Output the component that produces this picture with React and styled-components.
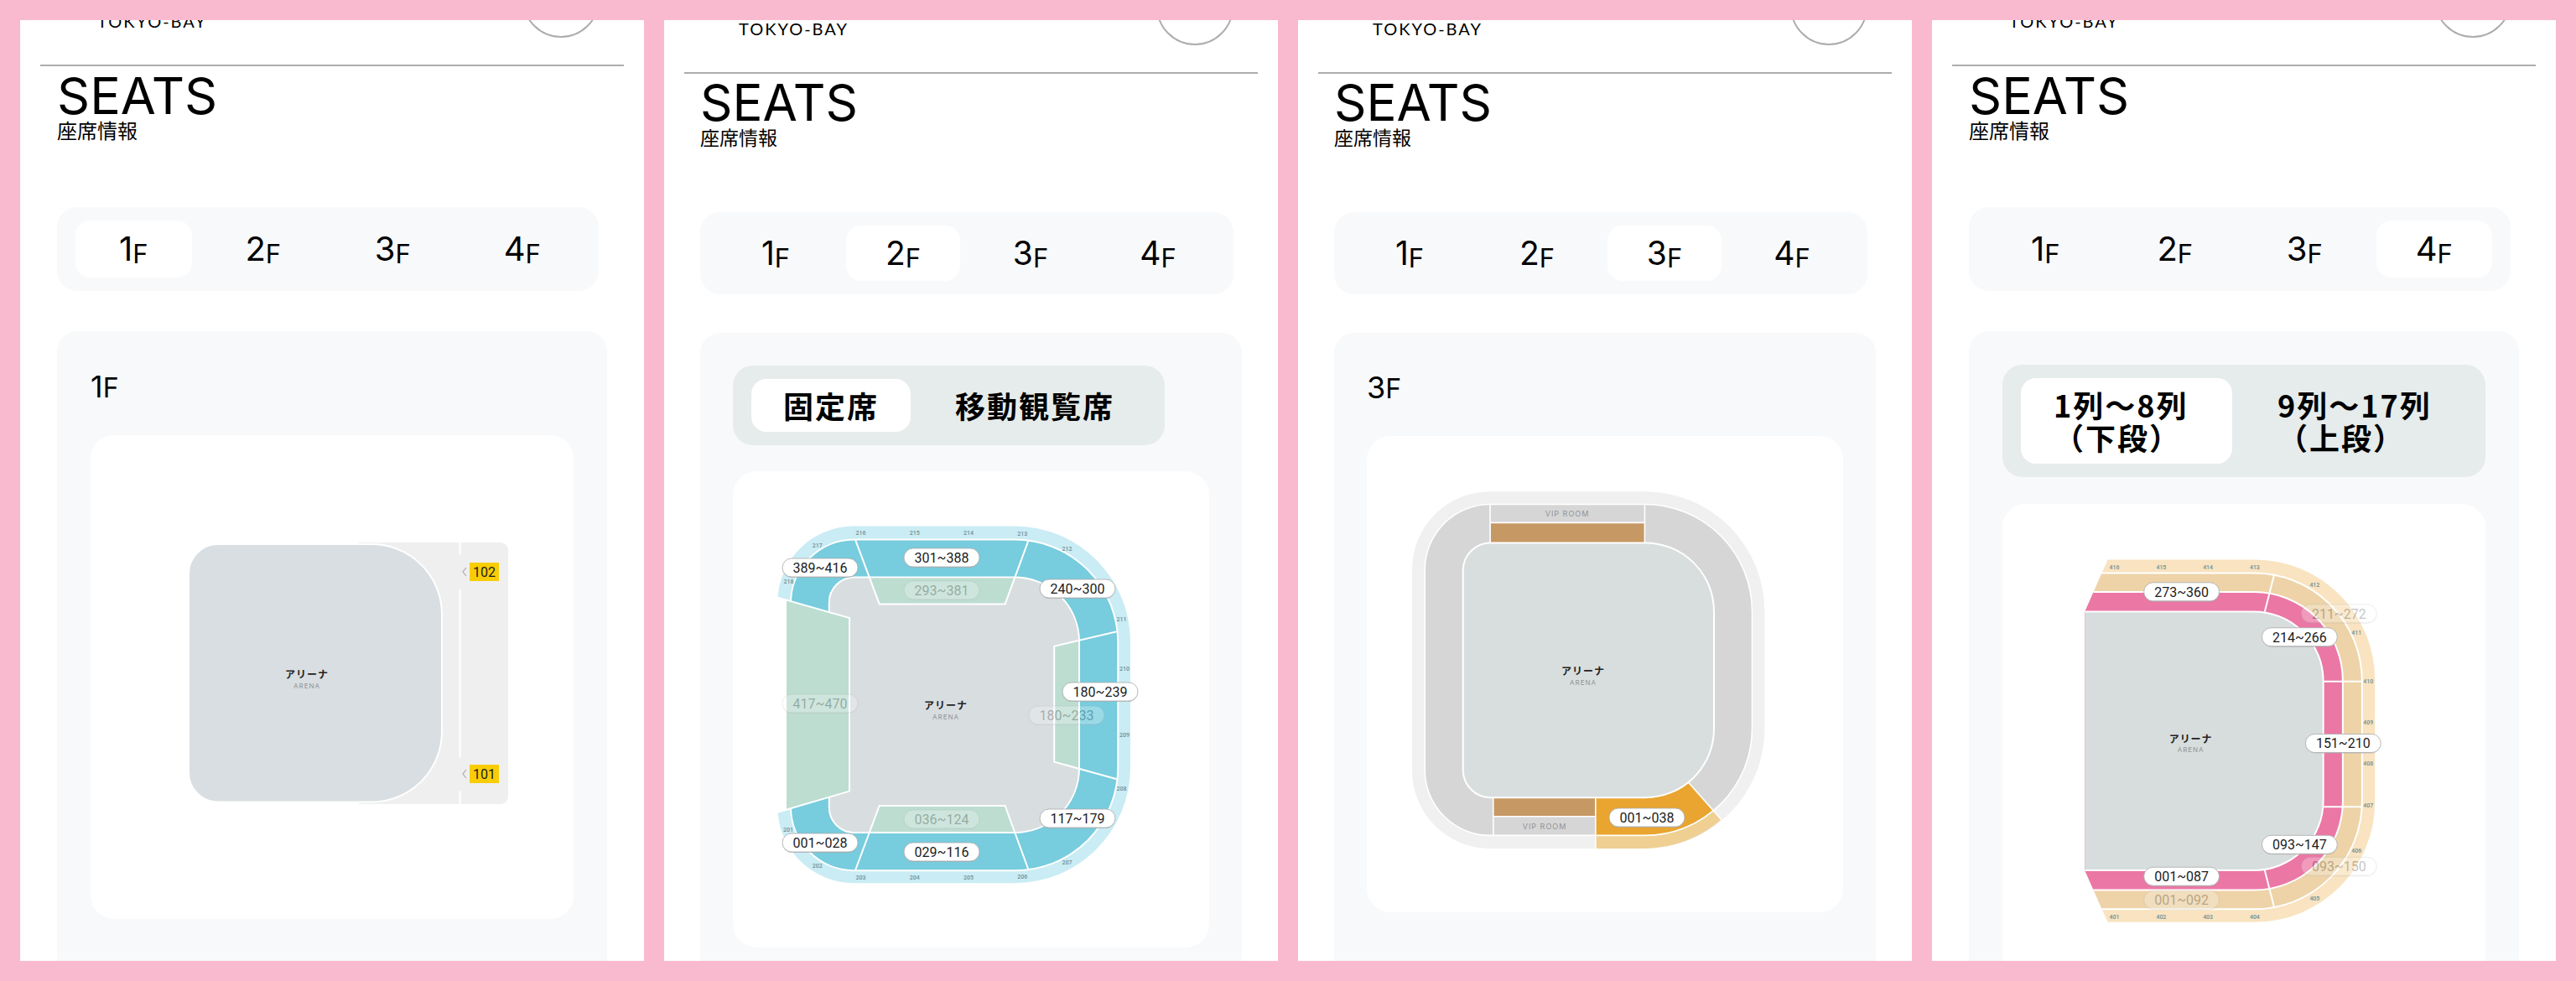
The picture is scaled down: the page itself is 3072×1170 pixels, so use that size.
import React, { useState } from 'react';
import styled, { createGlobalStyle, ThemeProvider } from 'styled-components';

const GlobalStyle = createGlobalStyle`
  *, *::before, *::after {
    box-sizing: border-box;
  }

  body {
    margin: 0;
    background: #f9bad0;
    color: #000;
    font-family: Inter, "Noto Sans CJK JP", sans-serif;
  }
`;

const regular = {
  scrolled: 73,
  edge: 44,
  placeStart: 68,
  headGap: 5,
  title: 61,
  subtitle: 24,
  tabsTop: 78,
  tabHeight: 68,
  tab: 40,
  cardTop: 48,
  cardPadding: 40,
  togglePadding: 39,
  toggleGap: 32,
};

const compact = {
  scrolled: 64,
  edge: 43,
  placeStart: 65,
  headGap: 4,
  title: 60,
  subtitle: 23,
  tabsTop: 76,
  tabHeight: 66,
  tab: 39,
  cardTop: 46,
  cardPadding: 39,
  togglePadding: 38,
  toggleGap: 31,
};

const Board = styled.main`
  display: grid;
  grid-template-columns: 62fr 61fr 61fr 62fr;
  grid-template-rows: minmax(0, 1fr);
  gap: 24px;
  height: 100vh;
  padding: 24px;
`;

const Phone = styled.section`
  min-width: 0;
  overflow: hidden;
  background: #fff;
`;

const Header = styled.header`
  display: flex;
  justify-content: space-between;
  align-items: flex-end;
  height: 128px;
  margin: -${({ theme }) => theme.scrolled}px 24px 0;
  padding: 0 29px 32px ${({ theme }) => theme.placeStart}px;
  border-bottom: 2px solid #adadad;
`;

const Place = styled.span`
  padding-bottom: 8px;
  font-family: Lato, sans-serif;
  font-size: 20px;
  line-height: 24px;
  letter-spacing: 2px;
`;

const MenuButton = styled.button`
  width: 92px;
  height: 92px;
  border: 2px solid #adadad;
  border-radius: 50%;
  background: none;
`;

const Content = styled.div`
  padding: ${({ theme }) => `${theme.headGap}px ${theme.edge}px 0`};
`;

const Title = styled.h1`
  margin: 0;
  font-size: ${({ theme }) => theme.title}px;
  font-weight: 400;
  line-height: 60px;
`;

const Subtitle = styled.p`
  margin: 1px 0 0;
  font-size: ${({ theme }) => theme.subtitle}px;
  line-height: 24px;
`;

const Tabs = styled.nav`
  display: grid;
  grid-template-columns: repeat(4, 1fr);
  gap: 16px;
  margin: ${({ theme }) => theme.tabsTop}px 10px 0 0;
  padding: 16px 22px;
  border-radius: 24px;
  background: #f8f9fb;
`;

const Tab = styled.button`
  display: flex;
  justify-content: center;
  align-items: center;
  height: ${({ theme }) => theme.tabHeight}px;
  padding: 0;
  border: 0;
  border-radius: 18px;
  background: ${({ $active }) => ($active ? '#fff' : 'transparent')};
  color: inherit;
  font-family: inherit;
  cursor: pointer;
`;

const TabLabel = styled.span`
  display: flex;
  align-items: flex-end;
  font-size: ${({ theme }) => theme.tab}px;
  line-height: 48px;

  > small {
    font-size: 31px;
    line-height: 36px;
  }
`;

const Card = styled.section`
  margin-top: ${({ theme }) => theme.cardTop}px;
  padding: ${({ theme }) => theme.cardPadding}px;
  padding-bottom: 80px;
  border-radius: 24px;
  background: #f8f9fb;
`;

const Caption = styled.h2`
  height: 84px;
  margin: 0;
  padding-top: 2px;
  font-size: 36px;
  font-weight: 400;
  line-height: 48px;

  > small {
    font-size: 32px;
  }
`;

const Toggle = styled.div`
  display: flex;
  gap: 15px;
  width: fit-content;
  max-width: 100%;
  margin-bottom: ${({ theme }) => theme.toggleGap}px;
  padding: 16px 22px;
  border-radius: 24px;
  background: #e6eceb;
`;

const ToggleButton = styled.button`
  padding: 12px ${({ theme }) => theme.togglePadding}px;
  border: 0;
  border-radius: 18px;
  background: ${({ $active }) => ($active ? '#fff' : 'transparent')};
  color: inherit;
  font-family: "Noto Sans CJK JP", sans-serif;
  font-size: 36px;
  font-weight: 700;
  line-height: 39px;
  letter-spacing: 2px;
  text-align: left;
  cursor: pointer;
`;

const MapBox = styled.div`
  border-radius: 28px;
  background: #fff;
`;

const MapSvg = styled.svg`
  display: block;
  width: 100%;
  height: auto;
`;

const Range = styled.text`
  fill: #1c1c1c;
  font-family: Roboto, sans-serif;
  font-size: 16px;
  text-anchor: middle;
`;

const Block = styled.text`
  fill: #6f8f95;
  font-family: Roboto, sans-serif;
  font-size: 7px;
  font-weight: 500;
  text-anchor: middle;
`;

const ArenaJa = styled.text`
  fill: #222;
  font-family: "Noto Sans CJK JP", sans-serif;
  font-size: 12px;
  font-weight: 700;
  letter-spacing: 1px;
  text-anchor: middle;
`;

const ArenaEn = styled.text`
  fill: #8f9496;
  font-family: Inter, sans-serif;
  font-size: ${({ $size }) => $size || 8}px;
  letter-spacing: 1px;
  text-anchor: middle;
`;

// rounded box: rl is the corner radius on the left side, rr on the right side
const ring = (l, t, r, b, rl, rr) =>
  `M${l + rl} ${t}H${r - rr}A${rr} ${rr} 0 0 1 ${r} ${t + rr}V${b - rr}A${rr} ${rr} 0 0 1 ${r - rr} ${b}H${l + rl}A${rl} ${rl} 0 0 1 ${l} ${b - rl}V${t + rl}A${rl} ${rl} 0 0 1 ${l + rl} ${t}Z`;

const Pill = ({ x, y, faded, children }) => (
  <g opacity={faded ? 0.26 : 1}>
    <rect x={x - 45} y={y - 11} width="90" height="23" rx="11.5" fill="#aaa" opacity="0.6" />
    <rect x={x - 45} y={y - 11} width="90" height="22" rx="11" fill="#fff" stroke="#aaa" strokeWidth="0.8" />
    <Range x={x} y={y + 6}>{children}</Range>
  </g>
);

const Arena = ({ x, y }) => (
  <>
    <ArenaJa x={x} y={y + 4}>アリーナ</ArenaJa>
    <ArenaEn x={x} y={y + 16}>ARENA</ArenaEn>
  </>
);

const Blocks = ({ items }) =>
  items.map(([name, x, y]) => (
    <Block key={name} x={x} y={y + 3}>{name}</Block>
  ));

const Gate = ({ y, children }) => (
  <>
    <path d={`M448 ${y - 5}l-4 5l4 5`} fill="none" stroke="#aaa" strokeWidth="1.2" />
    <rect x="452" y={y - 11} width="35" height="22" fill="#f8cd06" />
    <Range x="469.5" y={y + 6}>{children}</Range>
  </>
);

const FirstFloor = () => (
  <MapSvg viewBox="0 0 576 577" role="img" aria-label="1F">
    <path d="M320 128H489a9 9 0 0 1 9 9V431a9 9 0 0 1 -9 9H320Z" fill="#efefef" />
    <path d={ring(117, 130, 419, 437.5, 35, 84)} fill="#d8dee1" stroke="#fff" strokeWidth="2" />
    <path d="M440.5 128V143M440.5 183.5V384.5M440.5 424.5V440" stroke="#fff" strokeWidth="2" />
    <Gate y={163}>102</Gate>
    <Gate y={404}>101</Gate>
    <Arena x={258} y={286} />
  </MapSvg>
);

const secondBlocks = [
  ['216', 152.5, 73], ['215', 216.7, 73], ['214', 281, 73], ['213', 345.3, 74],
  ['212', 398.5, 91.6], ['217', 100.8, 88], ['218', 66.4, 131], ['211', 463.5, 176],
  ['210', 467, 235], ['209', 467, 313.7], ['208', 463.5, 378], ['207', 398.5, 466],
  ['206', 345.3, 483.4], ['205', 281, 484], ['204', 216.7, 484], ['203', 152.5, 484],
  ['202', 100.8, 470], ['201', 66, 427],
];

const SecondFloor = () => (
  <MapSvg viewBox="0 0 568 568" role="img" aria-label="2F">
    <path d={ring(53.3, 65.5, 474, 491.2, 91, 138)} fill="#caecf4" />
    <g stroke="#fff" strokeWidth="2">
      <path d={ring(69, 81.6, 459.3, 476.2, 76, 123)} fill="#77ccde" />
      <path d={ring(114.8, 126.4, 413, 431, 30, 77)} fill="#d8dde0" />
    </g>
    <path d="M40 147L64 153.7L139 175V381.6L64 403.7L40 410Z" fill="#fff" />
    <path d="M64 153.7L139 175V381.6L64 403.7Z" fill="#bdddd1" />
    <g fill="#bdddd1">
      <path d="M163 127.4H337L324.6 158.4H174.7Z" />
      <path d="M163 430H337L324.6 399H174.7Z" />
      <path d="M412 201.8L383.2 208.7V346.6L412 354.6Z" />
    </g>
    <g fill="none" stroke="#fff" strokeWidth="2">
      <path d="M50 149.6L139 175V381.6L50 407.8" />
      <path d="M146 81.6L174.7 158.4H324.6L352.2 83.4" />
      <path d="M146 476L174.7 399H324.6L352.2 474.5" />
      <path d="M457.8 191.2L383.2 208.7V346.6L457.8 367.3" />
    </g>
    <Blocks items={secondBlocks} />
    <Pill x={249} y={142} faded>293~381</Pill>
    <Pill x={104} y={277} faded>417~470</Pill>
    <Pill x={398} y={291} faded>180~233</Pill>
    <Pill x={249} y={415} faded>036~124</Pill>
    <Pill x={249} y={103}>301~388</Pill>
    <Pill x={104} y={115}>389~416</Pill>
    <Pill x={411} y={140}>240~300</Pill>
    <Pill x={438} y={263}>180~239</Pill>
    <Pill x={411} y={414}>117~179</Pill>
    <Pill x={104} y={443}>001~028</Pill>
    <Pill x={249} y={454}>029~116</Pill>
    <Arena x={254} y={280} />
  </MapSvg>
);

const ThirdFloor = () => (
  <MapSvg viewBox="0 0 568 568" role="img" aria-label="3F">
    <path d={ring(54, 66.2, 474.4, 492, 93, 143)} fill="#f0f0f0" />
    <path
      d="M273 476.4H332A128 128 0 0 0 412.4 446.2L422.8 457.6A143 143 0 0 1 332 492H273Z"
      fill="#efd092"
    />
    <path d={ring(69.2, 81.5, 459.5, 476.4, 78, 128)} fill="#d6d6d6" />
    <path
      d="M273 431.2H332A82 82 0 0 0 383 412.5L412.4 446.2A128 128 0 0 1 332 476.4H273Z"
      fill="#e9a530"
    />
    <path d="M148 104H331V127H148ZM151 432H273V453H151Z" fill="#c69863" />
    <g fill="none" stroke="#fff" strokeWidth="1.6">
      <path d={ring(69.2, 81.5, 459.5, 476.4, 78, 128)} />
      <path d="M147 81.5V127.4M331.4 81.5V127.4M147 103.4H331.4" />
      <path d="M150.8 431.2V476.4M150.8 453.8H272.8M272.8 431.2V492.5M382.5 412L423.8 458.6" />
    </g>
    <path d={ring(114.7, 127.4, 414, 431.2, 33, 82)} fill="#d8dede" stroke="#fff" strokeWidth="2" />
    <ArenaEn $size={9} x={239} y={96}>VIP ROOM</ArenaEn>
    <ArenaEn $size={9} x={212} y={469}>VIP ROOM</ArenaEn>
    <Pill x={334} y={455}>001~038</Pill>
    <Arena x={258} y={281} />
  </MapSvg>
);

const fourthBlocks = [
  ['416', 133.8, 75], ['415', 189.7, 75], ['414', 245.5, 75], ['413', 301.4, 75],
  ['412', 373, 96], ['411', 423, 153.3], ['410', 437, 211], ['409', 437, 260.4],
  ['408', 437, 309.7], ['407', 437, 359.4], ['406', 423, 414], ['405', 373, 471],
  ['404', 301.4, 493], ['403', 245.5, 493], ['402', 189.7, 493], ['401', 133.8, 493],
];

// half ring, open on the left and cut there by the slanted stand ends
const half = (t, r, b, radius) =>
  `M80 ${t}H${r - radius}A${radius} ${radius} 0 0 1 ${r} ${t + radius}V${b - radius}A${radius} ${radius} 0 0 1 ${r - radius} ${b}H80Z`;

const FourthFloor = () => (
  <MapSvg viewBox="0 0 577 577" role="img" aria-label="4F">
    <clipPath id="stands">
      <path d="M125.8 60V66.5L98.6 128.5V438.3L125.8 499.7V510H470V60Z" />
    </clipPath>
    <g clipPath="url(#stands)">
      <path d={half(66.5, 445, 499.7, 144)} fill="#f9e3c0" />
      <g stroke="#fff" strokeWidth="2">
        <path d={half(82.6, 429.6, 484.2, 129)} fill="#edd3a7" />
        <path d={half(105.2, 406.6, 461.4, 106)} fill="#eb77a5" />
        <path d={half(128.6, 383.3, 437.8, 83)} fill="#d7dddd" />
        <path d="M324.8 84L313.3 129M324.8 482.6L313.3 437.4M383.3 212.2H429.6M383.3 362H429.6" />
      </g>
    </g>
    <Blocks items={fourthBlocks} />
    <Pill x={402} y={131} faded>211~272</Pill>
    <Pill x={402} y={433} faded>093~150</Pill>
    <Pill x={214} y={473} faded>001~092</Pill>
    <Pill x={214} y={105}>273~360</Pill>
    <Pill x={355} y={159}>214~266</Pill>
    <Pill x={407} y={286}>151~210</Pill>
    <Pill x={355} y={407}>093~147</Pill>
    <Pill x={214} y={445}>001~087</Pill>
    <Arena x={225} y={281} />
  </MapSvg>
);

const Screen = ({ size, floor, options, children }) => {
  const [active, setActive] = useState(floor);
  const [option, setOption] = useState(0);

  return (
    <ThemeProvider theme={size}>
      <Phone>
        <Header>
          <Place>TOKYO-BAY</Place>
          <MenuButton aria-label="menu" />
        </Header>
        <Content>
          <Title>SEATS</Title>
          <Subtitle>座席情報</Subtitle>
          <Tabs>
            {[1, 2, 3, 4].map((n) => (
              <Tab key={n} $active={n === active} onClick={() => setActive(n)}>
                <TabLabel>
                  {n}
                  <small>F</small>
                </TabLabel>
              </Tab>
            ))}
          </Tabs>
          <Card>
            {options ? (
              <Toggle>
                {options.map((label, i) => (
                  <ToggleButton key={label} $active={i === option} onClick={() => setOption(i)}>
                    {label}
                  </ToggleButton>
                ))}
              </Toggle>
            ) : (
              <Caption>
                {floor}
                <small>F</small>
              </Caption>
            )}
            <MapBox>{children}</MapBox>
          </Card>
        </Content>
      </Phone>
    </ThemeProvider>
  );
};

const App = () => (
  <>
    <GlobalStyle />
    <Board>
      <Screen size={regular} floor={1}>
        <FirstFloor />
      </Screen>
      <Screen size={compact} floor={2} options={['固定席', '移動観覧席']}>
        <SecondFloor />
      </Screen>
      <Screen size={compact} floor={3}>
        <ThirdFloor />
      </Screen>
      <Screen size={regular} floor={4} options={['1列〜8列（下段）', '9列〜17列（上段）']}>
        <FourthFloor />
      </Screen>
    </Board>
  </>
);

export default App;
